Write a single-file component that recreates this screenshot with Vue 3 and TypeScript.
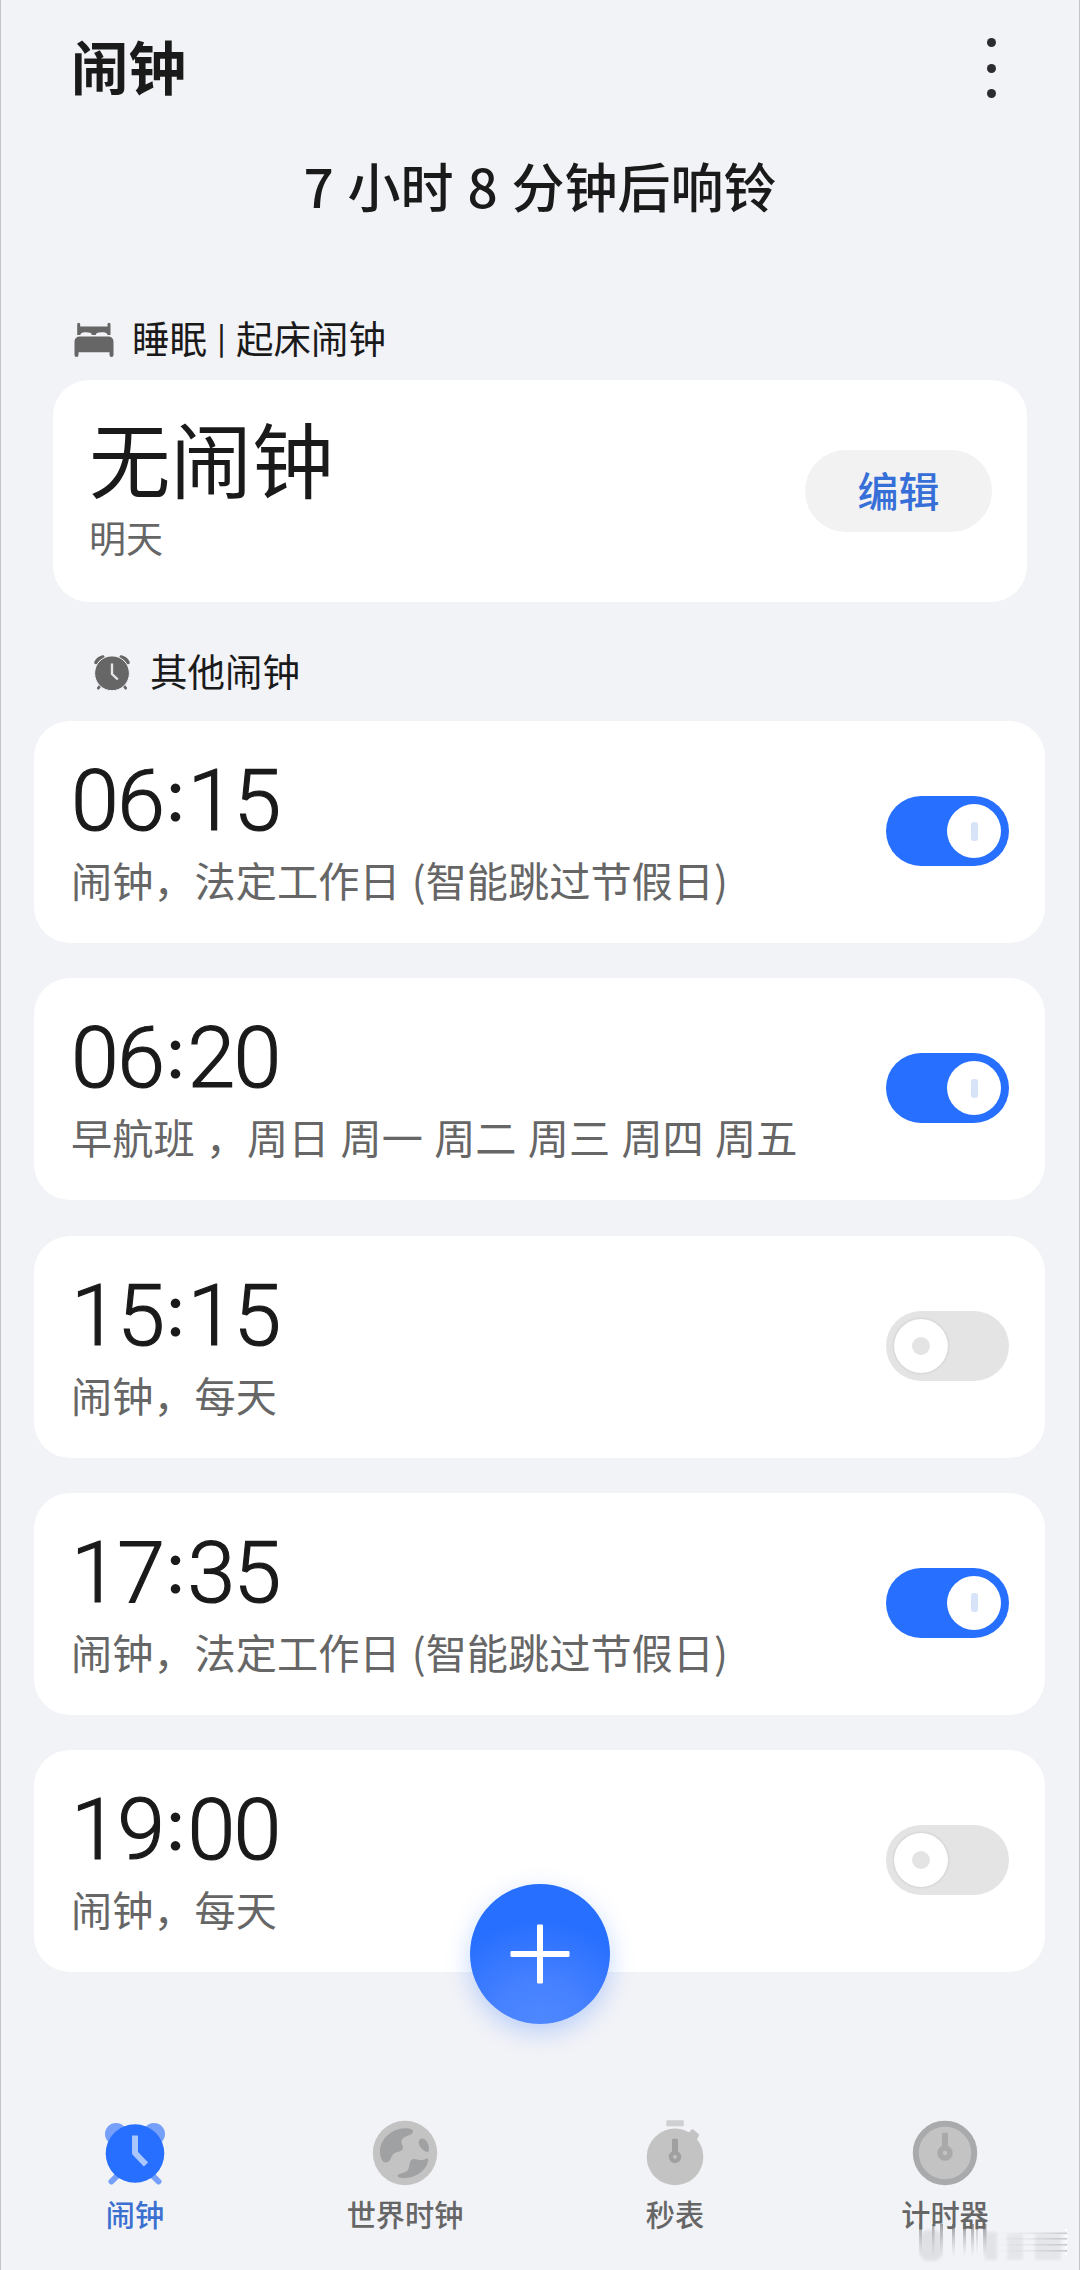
<script setup lang="ts">
import { ref } from 'vue'

interface Alarm {
  hour: string
  minute: string
  note: string
  on: boolean
}

interface Tab {
  id: 'alarm' | 'world' | 'stopwatch' | 'timer'
  label: string
}

const alarms = ref<Alarm[]>([
  { hour: '06', minute: '15', note: '闹钟，法定工作日 (智能跳过节假日)', on: true },
  { hour: '06', minute: '20', note: '早航班 ，周日 周一 周二 周三 周四 周五', on: true },
  { hour: '15', minute: '15', note: '闹钟，每天', on: false },
  { hour: '17', minute: '35', note: '闹钟，法定工作日 (智能跳过节假日)', on: true },
  { hour: '19', minute: '00', note: '闹钟，每天', on: false },
])

const tabs: Tab[] = [
  { id: 'alarm', label: '闹钟' },
  { id: 'world', label: '世界时钟' },
  { id: 'stopwatch', label: '秒表' },
  { id: 'timer', label: '计时器' },
]

const activeTab = ref<Tab['id']>('alarm')

// Vertical streaks of the corner mark: [x, width, opacity]
const streaks: [number, number, number][] = [
  [4, 3, 0.6],
  [17, 2.5, 0.5],
  [25, 3, 0.6],
  [37, 3, 0.65],
  [48, 3, 0.65],
  [56, 3, 0.6],
  [61, 2, 0.35],
  [68, 3.5, 0.65],
]
</script>

<template>
  <div class="page">
    <header class="header">
      <h1 class="title">闹钟</h1>
      <button class="more" aria-label="更多"><i></i><i></i><i></i></button>
    </header>

    <p class="countdown">7 小时 8 分钟后响铃</p>

    <div class="section sleep-section">
      <svg class="bed" width="40" height="36" viewBox="0 0 40 36" fill="#666">
        <path d="M3.200 2.200a1.500 1.500 0 0 1 3 0V4.500H33.500V2.200a1.500 1.500 0 0 1 3 0V13H33.500C33 10.500 30.500 10.300 28 10.300C24 10.300 22 11 21.700 13H18C17.700 11 15.500 10.300 12 10.300C9 10.300 7 10.500 6.200 13H3.200z" />
        <path d="M5.500 14.500H34.500a5 5 0 0 1 5 5V33a2 2 0 0 1-4 0V30.200H4.500V33a2 2 0 0 1-4 0V19.500a5 5 0 0 1 5-5z" />
      </svg>
      <span class="section-name">睡眠<span class="divider">|</span>起床闹钟</span>
    </div>

    <section class="card sleep-card">
      <div class="info">
        <div class="none">无闹钟</div>
        <div class="day">明天</div>
      </div>
      <button class="edit">编辑</button>
    </section>

    <div class="section other-section">
      <svg width="36" height="36" viewBox="0 0 36 36">
        <g fill="none" stroke="#666" stroke-linecap="round">
          <path d="M2 7.500C3.500 4.500 5.500 2.800 8.800 2" stroke-width="3.600" />
          <path d="M34 7.500C32.500 4.500 30.500 2.800 27.200 2" stroke-width="3.600" />
          <path d="M6 31L4.300 33.200M30 31L31.700 33.200" stroke-width="2.800" />
        </g>
        <circle cx="18" cy="18.300" r="17.400" fill="#666" stroke="#f2f3f7" stroke-width="1" />
        <path d="M18 8.500V19L23.800 24.500" fill="none" stroke="#e4e5e8" stroke-width="2.400" />
      </svg>
      <span class="section-name">其他闹钟</span>
    </div>

    <main class="list">
      <section v-for="(alarm, i) in alarms" :key="i" class="card alarm">
        <div class="info">
          <div class="time">{{ alarm.hour }}<span class="colon">:</span>{{ alarm.minute }}</div>
          <div class="note">{{ alarm.note }}</div>
        </div>
        <button class="switch" :class="{ on: alarm.on }" role="switch" :aria-checked="alarm.on" @click="alarm.on = !alarm.on">
          <span class="knob"><i></i></span>
        </button>
      </section>
    </main>

    <button class="fab" aria-label="新建闹钟">
      <svg width="60" height="60" viewBox="0 0 60 60">
        <rect x="0.500" y="27" width="59" height="6" rx="1" fill="#fff" />
        <rect x="27" y="0.500" width="6" height="59" rx="1" fill="#fff" />
      </svg>
    </button>

    <nav class="tabs">
      <button v-for="tab in tabs" :key="tab.id" class="tab" :class="{ active: tab.id === activeTab }" @click="activeTab = tab.id">
        <svg v-if="tab.id === 'alarm'" width="66" height="66" viewBox="0 0 66 66">
          <g fill="#759ff8">
            <circle cx="14" cy="14" r="11" />
            <circle cx="52" cy="14" r="11" />
          </g>
          <path d="M14 57L9.500 61.500M52 57L56.500 61.500" stroke="#759ff8" stroke-width="6" stroke-linecap="round" />
          <circle cx="33" cy="33.500" r="29.300" fill="#276fff" />
          <path d="M33 15.500V33L44 44.500" fill="none" stroke="#a9c6fd" stroke-width="6" stroke-linejoin="round" />
        </svg>
        <svg v-else-if="tab.id === 'world'" width="66" height="66" viewBox="0 0 66 66">
          <circle cx="33" cy="33" r="32.200" fill="#c3c3c4" />
          <g fill="#a0a1a2">
            <path d="M36.500 8.500C41 9 42.500 11.500 39.500 14C36.500 16 31 16.500 29.500 20.500C28.500 23.500 32.500 27 30.500 29.500C27.500 32.500 23 31.500 20.500 35C18.500 38 18 42.500 14 42.500C9.500 42.500 8 36 8 31C8 19 21 6.500 36.500 8.500z" />
            <path d="M49.500 18.500C54.500 18 58.500 26 56.500 31.500C54.500 33.500 47.500 28 46.800 23.500C46.500 20.500 47.500 18.700 49.500 18.500z" />
            <path d="M41.500 39C45 39 50 41.500 53.500 39C55.500 38 56.500 38.500 56 41.500C53 53 40 59.500 28.500 57.800C25 57 24.500 55.500 27 54.300C30 52.500 34.500 53 36.500 49C38 45.500 37 39.500 41.500 39z" />
          </g>
        </svg>
        <svg v-else-if="tab.id === 'stopwatch'" width="66" height="66" viewBox="0 0 66 66">
          <rect x="24.300" y="0.300" width="17.500" height="6" rx="1" fill="#cfd0d2" />
          <path d="M49.200 10.200L51 9.800L56.800 14.800L54.500 19.500L47 13z" fill="#c3c3c4" stroke="#c3c3c4" stroke-linejoin="round" />
          <circle cx="33" cy="36.900" r="28.300" fill="#c3c3c4" />
          <path d="M30 20a1.200 1.200 0 0 1 1.200-1.200H34.800A1.200 1.200 0 0 1 36 20V32H30z" fill="#a0a0a1" />
          <circle cx="33" cy="36.900" r="4.100" fill="none" stroke="#a0a0a1" stroke-width="4.300" />
        </svg>
        <svg v-else width="66" height="66" viewBox="0 0 66 66">
          <circle cx="33" cy="33" r="29.200" fill="#c3c3c4" stroke="#a9aaab" stroke-width="6" />
          <path d="M30 14a1.200 1.200 0 0 1 1.200-1.200H34.800A1.200 1.200 0 0 1 36 14V28H30z" fill="#a9a9aa" />
          <circle cx="33" cy="33" r="5" fill="none" stroke="#a9a9aa" stroke-width="5.400" />
        </svg>
        <span>{{ tab.label }}</span>
      </button>
    </nav>

    <svg class="mark" width="156" height="40" viewBox="0 0 156 40" aria-hidden="true">
      <defs>
        <linearGradient id="fadeDown" x1="0" y1="0" x2="0" y2="1">
          <stop offset="0" stop-color="#666" />
          <stop offset="1" stop-color="#aaa" stop-opacity="0" />
        </linearGradient>
        <linearGradient id="fadeSide" x1="0" y1="0" x2="1" y2="0">
          <stop offset="0" stop-color="#ccc" stop-opacity="0" />
          <stop offset="0.500" stop-color="#c4c4c6" stop-opacity="0.250" />
          <stop offset="1" stop-color="#b4b4b6" stop-opacity="0.650" />
        </linearGradient>
        <filter id="soft" x="-20%" y="-20%" width="140%" height="140%"><feGaussianBlur stdDeviation="1.600" /></filter>
      </defs>
      <g filter="url(#soft)" opacity="0.600">
        <rect x="5" y="6" width="22" height="31" rx="8" fill="#d4d5d9" />
        <rect x="70" y="8" width="12" height="28" fill="#d9dadd" />
        <rect x="92" y="10" width="16" height="26" fill="#dedfe2" />
        <rect x="120" y="10" width="26" height="26" fill="#dedfe2" />
      </g>
      <rect v-for="[x, w, o] in streaks" :key="x" :x="x" y="0" :width="w" height="33" fill="url(#fadeDown)" :opacity="o" />
      <rect v-for="y in [8.5, 14, 20, 26]" :key="y" x="76" :y="y" width="76" height="1.600" fill="url(#fadeSide)" />
      <g fill="#fff"><circle v-for="y in [6, 12, 17.5, 23.5, 30]" :key="y" cx="151" :cy="y" r="1.300" /></g>
    </svg>
  </div>
</template>

<style>
body {
  margin: 0;
}
</style>

<style scoped>
.page {
  position: relative;
  box-sizing: border-box;
  width: 1080px;
  height: 2270px;
  display: flex;
  flex-direction: column;
  overflow: hidden;
  background: #f2f3f7;
  border-left: 1px solid #c2c3ca;
  border-right: 1px solid #c2c3ca;
  color: #1a1a1a;
  font-family: 'Noto Sans CJK SC', sans-serif;
}

button {
  border: 0;
  padding: 0;
  background: none;
  font: inherit;
  color: inherit;
}

.header {
  height: 136px;
  box-sizing: border-box;
  padding: 0 83px 0 70px;
  display: flex;
  align-items: center;
  justify-content: space-between;
}

.title {
  margin: 0 0 6px;
  font-size: 57.500px;
  line-height: 80px;
  font-weight: 700;
}

.more {
  height: 60px;
  width: 9px;
  display: flex;
  flex-direction: column;
  justify-content: space-between;
}

.more i {
  width: 9px;
  height: 9px;
  border-radius: 50%;
  background: #2b2b30;
}

.countdown {
  margin: 11px 0 0;
  height: 76px;
  line-height: 76px;
  text-align: center;
  font-size: 53px;
  font-weight: 500;
  word-spacing: 2px;
}

.section {
  display: flex;
  align-items: center;
  font-size: 37.500px;
  line-height: 52px;
}

.section-name {
  margin-top: -3px;
  margin-bottom: 3px;
}

.divider {
  display: inline-block;
  width: 29px;
  text-align: center;
  font-size: 30px;
  font-weight: 500;
  line-height: 40px;
  position: relative;
  top: -4px;
}

.sleep-section {
  margin-top: 91px;
  padding-left: 73px;
  gap: 18px;
}

.other-section {
  margin-top: 45px;
  padding-left: 93px;
  gap: 20px;
}

.card {
  box-sizing: border-box;
  display: flex;
  align-items: center;
  justify-content: space-between;
  background: #fff;
  border-radius: 36px;
}

.sleep-card {
  height: 222px;
  margin: 14px 52px 0;
  padding: 0 35px 0 36px;
}

.sleep-card .info {
  margin-bottom: 8px;
}

.none {
  font-size: 81.500px;
  line-height: 90px;
}

.day {
  font-size: 37px;
  line-height: 52px;
  margin-top: 10px;
  color: #666;
}

.edit {
  width: 187px;
  height: 82px;
  box-sizing: border-box;
  padding-bottom: 4px;
  border-radius: 41px;
  background: #f2f2f2;
  color: #376fd9;
  font-size: 41px;
  font-weight: 500;
}

.list {
  margin: 22px 34px 0 33px;
  display: flex;
  flex-direction: column;
  gap: 35.300px;
}

.alarm {
  height: 222px;
  padding: 0 36px 2px 37px;
}

.time {
  height: 88px;
  margin-top: 4px;
  font-family: Roboto, sans-serif;
  font-size: 86px;
  font-weight: 300;
  line-height: 88px;
  letter-spacing: -1.500px;
  -webkit-text-stroke: 1.200px #1a1a1a;
}

.colon {
  display: inline-block;
  width: 24px;
  text-align: center;
  font-family: Lato, sans-serif;
  font-size: 76px;
  font-weight: 400;
  line-height: 60px;
  letter-spacing: 0;
  position: relative;
  top: -9px;
  -webkit-text-stroke: 0;
}

.note {
  margin-top: 4px;
  font-size: 41.200px;
  line-height: 60px;
  word-spacing: 2px;
  color: #666;
  white-space: nowrap;
}

.switch {
  width: 123px;
  height: 70px;
  border-radius: 35px;
  background: #e4e4e4;
  display: flex;
  align-items: center;
  box-sizing: border-box;
  padding: 0 8px;
}

.switch.on {
  background: #276fff;
  justify-content: flex-end;
}

.knob {
  width: 54px;
  height: 54px;
  border-radius: 50%;
  background: #fff;
  box-shadow: 0 0 3px rgba(0, 0, 0, 0.150);
  display: flex;
  align-items: center;
  justify-content: center;
}

.knob i {
  width: 18px;
  height: 18px;
  border-radius: 9px;
  background: #e4e4e4;
}

.on .knob {
  box-shadow: none;
}

.on .knob i {
  width: 7px;
  height: 19px;
  border-radius: 3px;
  background: #d6e3f8;
}

.fab {
  position: absolute;
  left: 469px;
  top: 1884px;
  width: 140px;
  height: 140px;
  border-radius: 50%;
  display: flex;
  align-items: center;
  justify-content: center;
  background: radial-gradient(circle at 50% 105%, #5089ff 0, #4681ff 30%, #276fff 68%);
  box-shadow: 0 8px 24px rgba(39, 111, 255, 0.280);
}

.tabs {
  margin: auto -1px 0;
  height: 150px;
  display: flex;
}

.tab {
  flex: 1;
  display: flex;
  flex-direction: column;
  align-items: center;
  font-size: 29.200px;
  line-height: 40px;
  font-weight: 500;
  color: #666;
}

.tab span {
  margin-top: 7px;
}

.tab svg {
  flex: none;
}

.tab.active {
  color: #3b6fd0;
}

.mark {
  position: absolute;
  right: 8px;
  bottom: 6px;
}
</style>
